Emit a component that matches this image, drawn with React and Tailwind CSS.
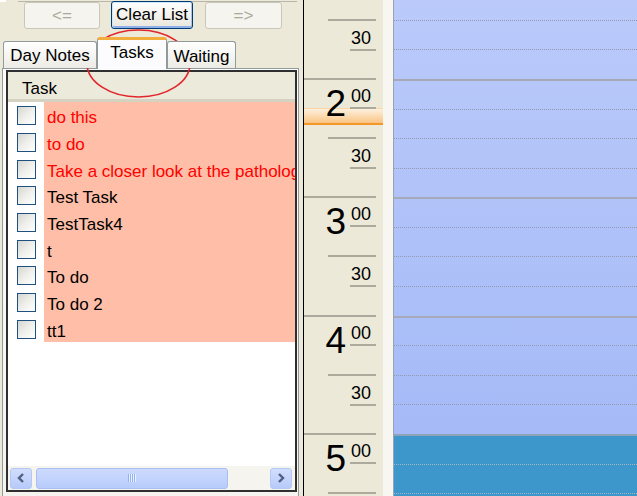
import React from 'react';

const tasks = [
  { text: 'do this', red: true },
  { text: 'to do', red: true },
  { text: 'Take a closer look at the pathology report', red: true },
  { text: 'Test Task' },
  { text: 'TestTask4' },
  { text: 't' },
  { text: 'To do' },
  { text: 'To do 2' },
  { text: 'tt1' },
];

const hours = [1, 2, 3, 4, 5];

function XpButton({ children, disabled, className }) {
  if (disabled) {
    return (
      <div
        className={`h-[27px] flex items-center justify-center rounded-[3px] border border-[#c9c7ba] bg-[#f5f4ef] text-[#aca899] ${className}`}
      >
        {children}
      </div>
    );
  }
  return (
    <div
      className={`h-[28px] -mt-[1px] flex items-center justify-center rounded-[3px] border border-[#003c74] bg-linear-to-b from-white to-[#e8e6dc] text-black shadow-[inset_0_1px_0_#cee7ff,inset_1px_0_0_#cee7ff,inset_-1px_0_0_#a9c4f2,inset_0_-2px_0_#8fb0e8] ${className}`}
    >
      {children}
    </div>
  );
}

function Checkbox() {
  return (
    <div className="w-[19px] h-[19px] border border-[#1c5180] bg-linear-to-br from-[#d6d6d0] via-[#efefeb] to-white" />
  );
}

function Arrow({ dir }) {
  return (
    <div className="w-[22px] h-[21px] rounded-[3px] border border-[#b4c8f4] bg-linear-to-b from-[#d3defd] to-[#b6cafa] flex items-center justify-center">
      <svg width="12" height="12" viewBox="0 0 12 12">
        {dir === 'left' ? (
          <path d="M8 2 L4 6 L8 10" fill="none" stroke="#4d6185" strokeWidth="2.4" />
        ) : (
          <path d="M4 2 L8 6 L4 10" fill="none" stroke="#4d6185" strokeWidth="2.4" />
        )}
      </svg>
    </div>
  );
}

// one hour of the ruler: hour line + big digit, then the half-hour line + "30"
function HourLabel({ h, showHour, showHalf }) {
  return (
    <div className="h-[118.33px] flex flex-col">
      <div className="h-[59.17px] flex flex-col">
        <div className="h-[2px] -mt-[1px] mr-[7px] bg-[#acaa9c]" />
        {showHour && (
          <div className="flex justify-end items-start pr-[7px]">
            <span className="text-[37px] leading-[37px] mt-[5px] mr-[4px]">{h}</span>
            <div className="w-[26px] h-[22px] mt-[7px] pl-[1px] border-b-2 border-[#acaa9c] text-[18px] leading-[18px]">
              00
            </div>
          </div>
        )}
      </div>
      <div className="h-[59.17px] flex flex-col">
        <div className="h-[2px] -mt-[1px] ml-[24px] mr-[7px] bg-[#acaa9c]" />
        {showHalf && (
          <div className="flex justify-end pr-[7px]">
            <div className="w-[26px] h-[22px] mt-[8px] pl-[1px] border-b-2 border-[#acaa9c] text-[18px] leading-[18px]">
              30
            </div>
          </div>
        )}
      </div>
    </div>
  );
}

function HourSlots({ dark }) {
  return (
    <div className="h-[118.33px] flex flex-col">
      {[0, 1, 2, 3].map((i) => (
        <div
          key={i}
          className={
            i === 0
              ? `h-[29.58px] border-t-2 ${dark ? 'border-[#8ea3b5]' : 'border-[#a6aab8]'}`
              : `h-[29.58px] border-t border-dotted ${dark ? 'border-[#a3b6c4]' : 'border-[#9299b0]'}`
          }
        />
      ))}
    </div>
  );
}

export default function App() {
  return (
    <div
      className="relative w-[637px] h-[496px] overflow-hidden flex bg-[#ece9d8] text-[17px] text-black"
      style={{ fontFamily: '"Liberation Sans", Arial, sans-serif' }}
    >
      {/* left panel */}
      <div className="w-[304px] shrink-0 h-full border-r border-black flex flex-col">
        <div className="h-[4px] flex">
          <div className="w-[6px] h-[2px] bg-white" />
          <div className="flex-1 h-[2px] ml-[12px] mr-[6px] border-b border-[#b8b6aa]" />
        </div>

        <div className="flex pl-[24px]">
          <XpButton disabled className="w-[76px]">&lt;=</XpButton>
          <XpButton className="w-[82px] ml-[11px]">Clear List</XpButton>
          <XpButton disabled className="w-[77px] ml-[12px]">=&gt;</XpButton>
        </div>

        <div className="relative z-10 mt-[8px] -mb-px h-[32px] flex items-start pl-[3px]">
          <div className="mt-[4px] w-[94px] h-[27px] pt-[2px] flex items-center justify-center rounded-t-[3px] border border-b-0 border-[#919b9c] bg-linear-to-b from-white to-[#ecebe5]">
            Day Notes
          </div>
          <div className="w-[70px] h-[32px] flex items-center justify-center pb-[3px] rounded-t-[3px] border-t-[3px] border-x border-t-[#f3ad3c] border-x-[#919b9c] bg-[#fcfcfe]">
            Tasks
          </div>
          <div className="mt-[4px] w-[69px] h-[27px] pt-[3px] flex items-center justify-center rounded-t-[3px] border border-b-0 border-[#919b9c] bg-linear-to-b from-white to-[#ecebe5]">
            Waiting
          </div>
        </div>

        <div className="ml-[2px] mr-[4px] h-[440px] shrink-0 border border-[#919b9c] bg-linear-to-b from-[#fcfcfe] to-[#f4f3ee] pt-[1px] pl-[3px] pr-[1px]">
          <div className="h-[422px] border-2 border-[#2f2f2f] bg-white flex flex-col">
            <div className="h-[30px] shrink-0 bg-[#ebeadb] border-b-[3px] border-[#d6d2c2] pl-[14px] pt-[6px] flex items-center">
              Task
            </div>
            {tasks.map((t, i) => (
              <div key={i} className={`${i % 3 === 2 ? 'h-[26px]' : 'h-[27px]'} shrink-0 flex`}>
                <div className="w-[36px] pl-[9px] flex items-center bg-white">
                  <Checkbox />
                </div>
                <div
                  className={`flex-1 bg-[#ffbea7] pl-[3px] pt-[5px] whitespace-nowrap overflow-hidden leading-[21px] ${
                    t.red ? 'text-[#ff0000]' : 'text-black'
                  }`}
                >
                  {t.text}
                </div>
              </div>
            ))}
            <div className="flex-1" />
            <div className="h-[24px] shrink-0 bg-[#f5f4ef] flex items-center pl-[2px] pr-[3px]">
              <Arrow dir="left" />
              <div className="ml-[4px] w-[192px] h-[21px] rounded-[3px] border border-[#a9bff3] bg-linear-to-b from-[#cddafd] to-[#b8ccfb] flex items-center justify-center">
                {[0, 1, 2, 3].map((i) => (
                  <div key={i} className="w-[1px] h-[8px] bg-[#8fb0f4] shadow-[1px_0_0_#eef4ff] mr-[1px]" />
                ))}
              </div>
              <div className="flex-1" />
              <Arrow dir="right" />
            </div>
          </div>
        </div>
      </div>

      {/* time ruler */}
      <div className="relative w-[79px] shrink-0 h-full overflow-hidden bg-[#ece9d8]">
        <div className="absolute left-0 right-0 top-[108px] h-[17px] border-t border-[#fbd6a2] bg-linear-to-b from-[#fdf0de] to-[#f9c481] border-b-2 border-b-[#f5962a]" />
        <div className="relative -mt-[39.33px]">
          {hours.map((h) => (
            <HourLabel key={h} h={h} showHour={h !== 1} showHalf={h !== 5} />
          ))}
        </div>
      </div>

      <div className="w-[10px] shrink-0 h-full bg-[#f7f6f1]" />

      {/* day column */}
      <div className="flex-1 h-full overflow-hidden border-l border-[#9ca2b2]">
        <div className="-mt-[39.33px]">
          <div className="bg-linear-to-b from-[#bccbfa] to-[#a5baf7]">
            {[1, 2, 3, 4].map((h) => (
              <HourSlots key={h} />
            ))}
          </div>
          <div className="bg-[#3d97ca]">
            <HourSlots dark />
          </div>
        </div>
      </div>

      <svg className="absolute left-0 top-0 pointer-events-none" width="637" height="496">
        <ellipse cx="138.5" cy="63.5" rx="51.5" ry="33.5" fill="none" stroke="#e3262b" strokeWidth="1.6" />
      </svg>
    </div>
  );
}
